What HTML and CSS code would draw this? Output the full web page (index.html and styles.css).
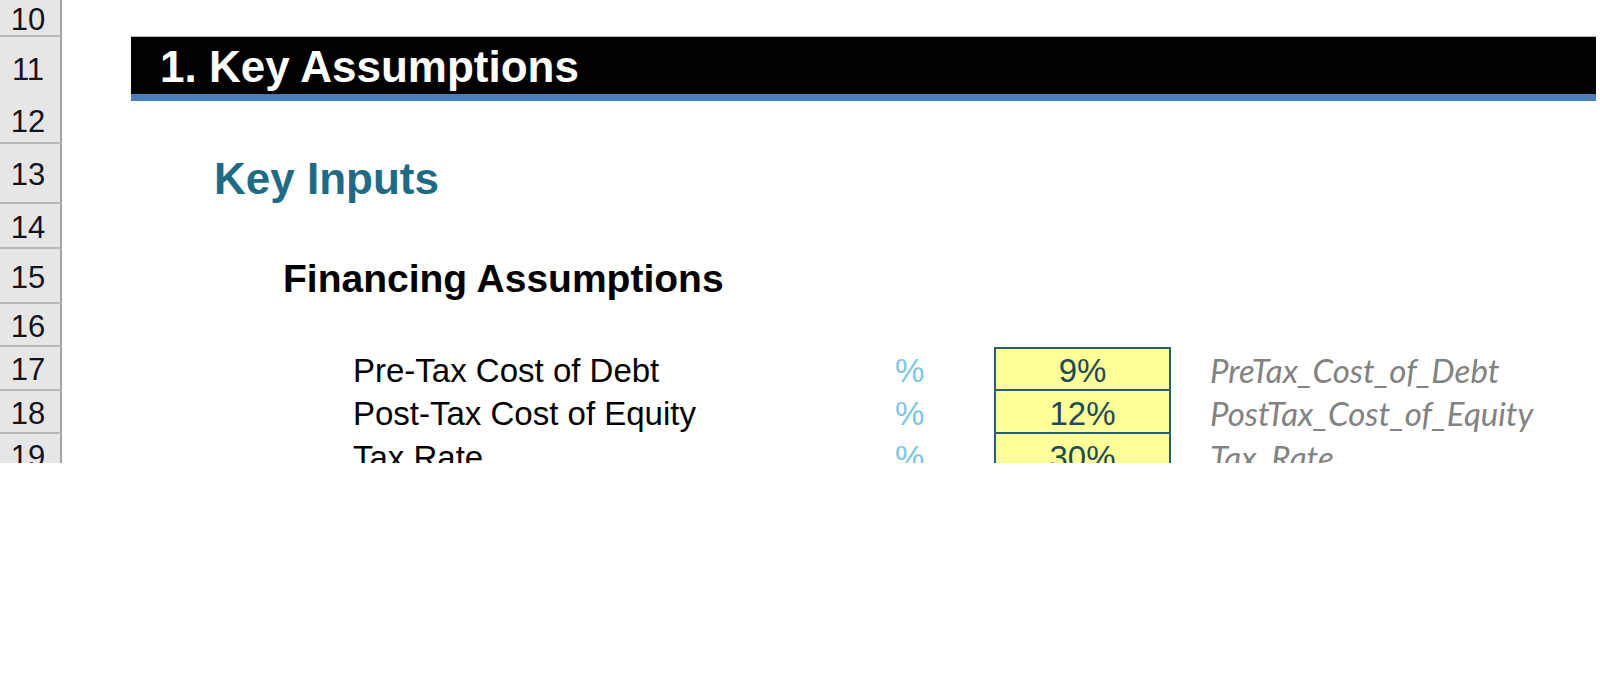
FILE: index.html
```html
<!DOCTYPE html>
<html lang="en">
<head>
    <meta charset="UTF-8">
    <meta name="viewport" content="width=device-width, initial-scale=1.0">
    <title>Key Assumptions</title>
    <link rel="stylesheet" href="styles.css">
</head>
<body>
    <div class="sheet">
        <div class="row r10">
            <div class="num">10</div>
            <div class="cells"></div>
        </div>
        <div class="row r11">
            <div class="num">11</div>
            <div class="cells">
                <div class="banner">1. Key Assumptions</div>
            </div>
        </div>
        <div class="row r12">
            <div class="num">12</div>
            <div class="cells"></div>
        </div>
        <div class="row r13">
            <div class="num">13</div>
            <div class="cells">
                <h2 class="section">Key Inputs</h2>
            </div>
        </div>
        <div class="row r14">
            <div class="num">14</div>
            <div class="cells"></div>
        </div>
        <div class="row r15">
            <div class="num">15</div>
            <div class="cells">
                <h3 class="subsection">Financing Assumptions</h3>
            </div>
        </div>
        <div class="row r16">
            <div class="num">16</div>
            <div class="cells"></div>
        </div>
        <div class="row r17">
            <div class="num">17</div>
            <div class="cells input">
                <span class="label">Pre-Tax Cost of Debt</span>
                <span class="unit">%</span>
                <span class="value first">9%</span>
                <span class="name">PreTax_Cost_of_Debt</span>
            </div>
        </div>
        <div class="row r18">
            <div class="num">18</div>
            <div class="cells input">
                <span class="label">Post-Tax Cost of Equity</span>
                <span class="unit">%</span>
                <span class="value">12%</span>
                <span class="name">PostTax_Cost_of_Equity</span>
            </div>
        </div>
        <div class="row r19">
            <div class="num">19</div>
            <div class="cells input">
                <span class="label">Tax Rate</span>
                <span class="unit">%</span>
                <span class="value">30%</span>
                <span class="name">Tax_Rate</span>
            </div>
        </div>
    </div>
</body>
</html>
```

FILE: styles.css
```css
body {
    margin: 0;
    background: #fff;
    font-family: "Liberation Sans", Arial, sans-serif;
    color: #000;
}

.sheet {
    height: 463px;
    overflow: hidden;
}

.row {
    display: grid;
    grid-template-columns: 62px 1fr;
}

.r10 { height: 37px; }
.r11 { height: 61px; }
.r12 { height: 46px; }
.r13 { height: 60px; }
.r14 { height: 45px; }
.r15 { height: 55px; }
.r16 { height: 43px; }
.r17 { height: 44px; }
.r18 { height: 43px; }
.r19 { height: 44px; }

/* row headers */
.num {
    box-sizing: border-box;
    display: flex;
    align-items: center;
    justify-content: center;
    padding: 3px 4px 0 0;
    background: #e6e6e6;
    border-right: 2px solid #a3a3a3;
    border-bottom: 2px solid #b8b8b8;
    font-size: 31px;
    line-height: 1;
    color: #14141e;
}

.cells {
    display: flex;
    align-items: flex-end;
    min-width: 0;
}

/* 1. Key Assumptions */
.r11 .cells {
    align-items: flex-start;
    padding: 0 4px 0 69px;
}

.banner {
    flex: 1;
    height: 52px;
    display: flex;
    align-items: flex-end;
    padding: 0 0 5px 29px;
    background: #000;
    border-bottom: 7px solid #4a7ebb;
    box-shadow: 0 -1px 0 #b5b5b5;
    color: #fff;
    font-size: 44px;
    font-weight: bold;
    line-height: 1;
}

.section {
    margin: 0 0 3px 152px;
    font-size: 44px;
    line-height: 1;
    color: #1f6b85;
}

.subsection {
    margin: 0 0 6px 221px;
    font-size: 39px;
    line-height: 1;
    color: #000;
}

/* input rows */
.input {
    display: grid;
    grid-template-columns: 542px 99px 177px 1fr;
    align-items: stretch;
    padding-left: 291px;
    font-size: 33px;
    line-height: 1;
}

.input span {
    display: flex;
    align-items: flex-end;
    padding-bottom: 4px;
    white-space: nowrap;
}

.unit {
    color: #7ec6e2;
}

.input .value {
    box-sizing: border-box;
    justify-content: center;
    padding-bottom: 2px;
    background: #ffff99;
    border: 2px solid #2b5d6a;
    border-top: none;
    color: #1f4a56;
}

.input .value.first {
    border-top: 2px solid #2b5d6a;
}

.name {
    padding-left: 39px;
    font-family: Lato, "Open Sans", sans-serif;
    font-style: italic;
    font-size: 33px;
    color: #828282;
}
```
